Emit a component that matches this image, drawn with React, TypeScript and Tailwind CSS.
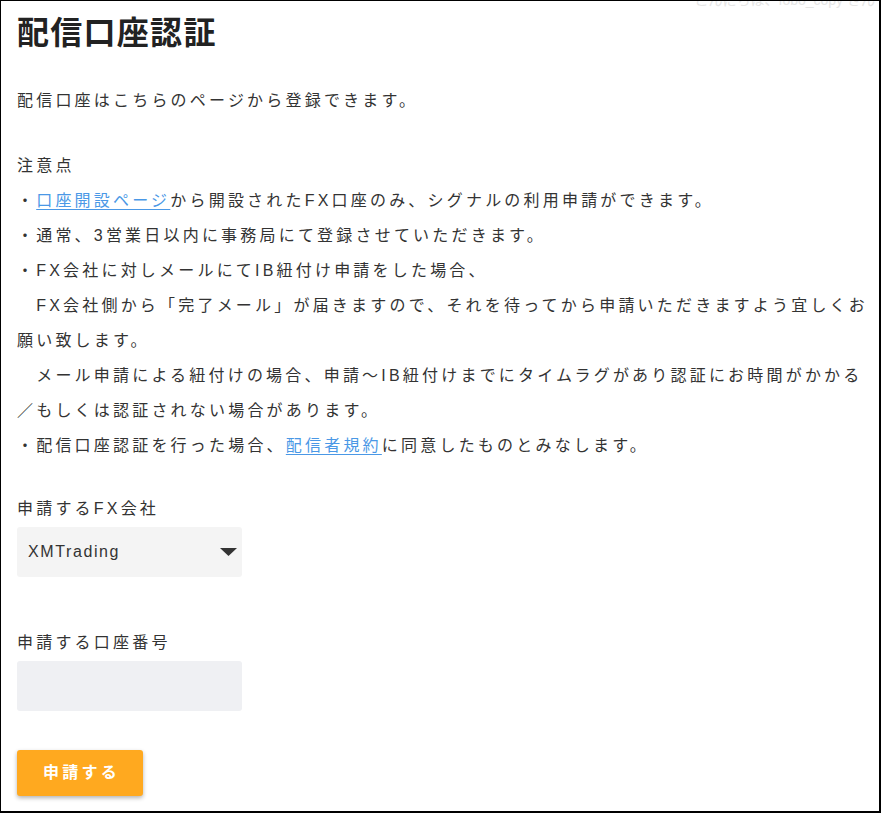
import { useState } from "react";

const FONT = "font-['Liberation_Sans','Noto_Sans_CJK_JP',sans-serif]";
const SP = "\u3000";

function Notes() {
    return (
        <div className="mt-[30px] whitespace-nowrap leading-[35px]">
            注意点
            <br />
            ・<a href="#" className="text-[#4a98e6] underline underline-offset-[3px]">口座開設ページ</a>から開設されたFX口座のみ、シグナルの利用申請ができます。
            <br />
            ・通常、3営業日以内に事務局にて登録させていただきます。
            <br />
            ・FX会社に対しメールにてIB紐付け申請をした場合、
            <br />
            {SP}FX会社側から「完了メール」が届きますので、それを待ってから申請いただきますよう宜しくお
            <br />
            願い致します。
            <br />
            {SP}メール申請による紐付けの場合、申請～IB紐付けまでにタイムラグがあり認証にお時間がかかる
            <br />
            ／もしくは認証されない場合があります。
            <br />
            ・配信口座認証を行った場合、<a href="#" className="text-[#4a98e6] underline underline-offset-[3px]">配信者規約</a>に同意したものとみなします。
        </div>
    );
}

export default function App() {
    const [company, setCompany] = useState("XMTrading");
    const [account, setAccount] = useState("");

    return (
        <div className={`${FONT} bg-white w-[884px] h-[814px]`}>
            <div className="relative w-[881px] h-[813px] overflow-hidden border-l border-t border-r-2 border-b-2 border-black pl-4 pt-2 text-[#333] text-[16px] tracking-[0.2em]">
                <div className="absolute right-[4px] top-[-11px] text-[14px] leading-5 tracking-normal text-[#e6e6e6] whitespace-nowrap">
                    こんにちは、fobo_copy さん
                </div>

                <h1 className="text-[32px] font-bold leading-[48px] tracking-[0.04em] text-[#222]">配信口座認証</h1>

                <p className="mt-[26px] leading-[35px]">配信口座はこちらのページから登録できます。</p>

                <Notes />

                <div className="mt-[28px] leading-[35px]">申請するFX会社</div>
                <div className="relative mt-[1px] w-[225px] h-[50px] rounded-[3px] bg-[#f4f4f4]">
                    <select
                        value={company}
                        onChange={(e) => setCompany(e.target.value)}
                        className="w-full h-full appearance-none bg-transparent pl-[11px] pr-8 text-[16px] tracking-[0.1em] text-[#333] outline-none"
                    >
                        <option>XMTrading</option>
                    </select>
                    <svg className="pointer-events-none absolute right-[5px] top-[21px]" width="17" height="8" viewBox="0 0 17 8">
                        <polygon points="0,0 17,0 8.5,8" fill="#333" />
                    </svg>
                </div>

                <div className="mt-[48px] leading-[35px]">申請する口座番号</div>
                <input
                    value={account}
                    onChange={(e) => setAccount(e.target.value)}
                    className="block mt-[1px] w-[225px] h-[50px] rounded-[3px] bg-[#eff0f3] px-3 outline-none"
                />

                <button
                    type="button"
                    className="block mt-[39px] w-[126px] h-[46px] rounded-[3px] bg-[#ffa91f] text-white font-bold text-[16px] tracking-[0.2em] shadow-[0_2px_4px_rgba(0,0,0,0.3)] pl-[3px]"
                >
                    申請する
                </button>
            </div>
        </div>
    );
}
